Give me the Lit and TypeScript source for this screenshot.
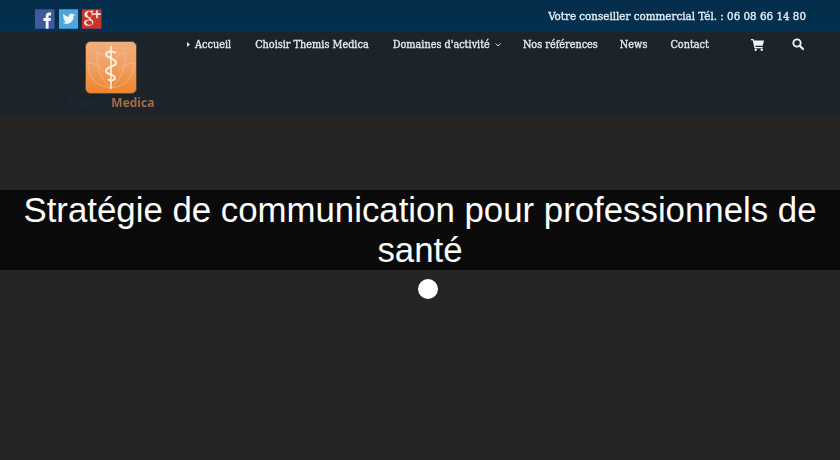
import { LitElement, html, css } from "lit";
import { customElement } from "lit/decorators.js";

@customElement("app-root")
export class AppRoot extends LitElement {
  static styles = css`
    :host {
      display: block;
      width: 840px;
      height: 460px;
      overflow: hidden;
      background: #252525;
      font-family: "Liberation Sans", Arial, sans-serif;
    }
    .topbar {
      height: 32px;
      background: linear-gradient(#032d4b, #03314f);
      display: flex;
      align-items: center;
      justify-content: space-between;
      padding: 0 34px 0 35px;
      box-sizing: border-box;
    }
    .social {
      display: flex;
      gap: 4px;
      margin-top: 5px;
      filter: blur(0.4px);
    }
    .social svg {
      display: block;
      width: 19.500px;
      height: 20px;
    }
    .phone {
      font-family: "DejaVu Serif Condensed", "DejaVu Serif", serif;
      font-stretch: condensed;
      font-size: 11.500px;
      color: #e3edf3;
      margin-top: -1px;
      -webkit-text-stroke: 0.35px #e3edf3;
      filter: blur(0.3px);
    }
    .navbar {
      height: 82px;
      background: #1c242b;
      display: flex;
      align-items: flex-start;
      box-sizing: border-box;
      padding-left: 70px;
    }
    .logo {
      width: 116px;
      display: flex;
      flex-direction: column;
      flex: none;
    }
    .logo svg {
      display: block;
      width: 52px;
      height: 53px;
      margin: 9px 0 0 15px;
      filter: blur(0.5px);
    }
    .wordmark {
      font-family: "Open Sans", sans-serif;
      font-weight: 700;
      font-size: 12px;
      line-height: 16px;
      margin: 1px 0 0 -2px;
      color: #a96a3e;
      white-space: nowrap;
      filter: blur(0.3px);
    }
    .wordmark span {
      color: #1b2937;
    }
    .menu {
      display: flex;
      align-items: center;
      height: 24px;
      font-family: "DejaVu Serif Condensed", "DejaVu Serif", serif;
      font-stretch: condensed;
      font-size: 10.800px;
      color: #e4e8ea;
      white-space: nowrap;
      -webkit-text-stroke: 0.35px #e4e8ea;
      filter: blur(0.3px);
    }
    .menu > span {
      display: flex;
      align-items: center;
    }
    .caret {
      width: 3px;
      height: 5px;
      margin-right: 5px;
      margin-top: 1px;
    }
    .chev {
      width: 6px;
      height: 4px;
      margin-left: 5px;
      margin-top: 2px;
    }
    .i1 { margin-left: 1px; }
    .i2 { margin-left: 24px; }
    .i3 { margin-left: 24px; }
    .i4 { margin-left: 22px; }
    .i5 { margin-left: 22px; }
    .i6 { margin-left: 23px; }
    .cart {
      width: 13px;
      height: 13px;
      margin-left: 42px;
    }
    .search {
      width: 12px;
      height: 12px;
      margin-left: 28px;
    }
    .content {
      padding-top: 76px;
      display: flex;
      flex-direction: column;
    }
    h1 {
      margin: 0;
      background: #0a0a0a;
      color: #fff;
      font-weight: 400;
      font-size: 34.800px;
      line-height: 40px;
      text-align: center;
    }
    .dot {
      width: 20px;
      height: 20px;
      border-radius: 50%;
      background: #fff;
      margin: 9px 0 0 418px;
    }
  `;

  render() {
    return html`
      <div class="topbar">
        <div class="social">
          <svg viewBox="0 0 20 20">
            <rect width="20" height="20" fill="#3f5a9c" />
            <path d="M11 20v-8H8.600V9H11V7c0-2.400 1.400-3.600 3.500-3.600h2v2.900h-1.400c-.9 0-1.200.5-1.200 1.200V9h2.500l-.4 3h-2.100v8z" fill="#f2f4f8" />
          </svg>
          <svg viewBox="0 0 20 20">
            <rect width="20" height="20" fill="#4fa6dc" />
            <path d="M16.500 5.600c-.5.2-1 .4-1.500.4.600-.3 1-.8 1.200-1.400-.5.3-1.100.5-1.700.6a2.700 2.700 0 0 0-4.500 2.400C7.800 7.500 5.900 6.500 4.600 4.900c-.7 1.200-.4 2.800.8 3.600-.4 0-.8-.1-1.200-.3 0 1.300.9 2.400 2.100 2.700-.4.100-.8.100-1.200 0 .3 1.100 1.300 1.800 2.500 1.900-1.100.9-2.500 1.200-3.900 1.100 4.700 2.800 11.400.3 11.300-6.900.5-.4 1-.9 1.500-1.400z" fill="#eef7fc" />
          </svg>
          <svg viewBox="0 0 20 20">
            <rect width="20" height="20" fill="#c8352b" />
            <path d="M7.500 1.500c-3 0-5 1.700-5 3.900 0 2 1.500 3.400 3.700 3.400h.7c-.3.700 0 1.200.4 1.700-2.800.1-5.300 1.100-5.300 3.300 0 1.900 2.200 3.200 4.900 3.200 3 0 4.800-1.800 4.800-3.500 0-2.700-3-3.100-3-4.500 0-1.100 2.400-1.500 2.400-4.100 0-1.100-.6-1.900-1.100-2.300h1.200l1.100-1.100zm.7 6.700c-1.600 0-2.800-1.700-2.800-3.400 0-1.300.7-2.400 1.900-2.400 1.600 0 2.700 1.800 2.700 3.400 0 1.400-.7 2.400-1.800 2.400zM7.300 11.200c1.900.6 3.300 1.400 3.300 2.800 0 1.200-1.100 2-3 2-1.900 0-3.300-1-3.300-2.400 0-1.500 1.400-2.400 3-2.400z" fill="#f7e6e2" />
            <path d="M14.500 1v3.200h-3v1.800h3v3.200h1.700V6h3V4.200h-3V1z" fill="#f7e6e2" />
          </svg>
        </div>
        <div class="phone">Votre conseiller commercial Tél. : 06 08 66 14 80</div>
      </div>
      <div class="navbar">
        <div class="logo">
          <svg viewBox="0 0 52 53">
            <defs>
              <linearGradient id="lg" x1="0" y1="0" x2="0" y2="1">
                <stop offset="0" stop-color="#f0b080" />
                <stop offset="0.55" stop-color="#f09c5e" />
                <stop offset="1" stop-color="#ee842e" />
              </linearGradient>
            </defs>
            <rect x="0.500" y="0.500" width="51" height="52" rx="5" fill="url(#lg)" stroke="#6a4426" />
            <g fill="none" stroke="#f9d6b4" stroke-width="0.800" opacity="0.500">
              <path d="M26 47C12 46 3 37 3 22c6 0 12 3 16 8M26 47c14-1 23-10 23-25-6 0-12 3-16 8" />
              <path d="M26 47C17 40 11 28 12 11c5 2 10 6 14 11 4-5 9-9 14-11 1 17-5 29-14 36z" />
            </g>
            <path d="M26 5v43" stroke="#fff3e6" stroke-width="1.500" />
            <path d="M31 12c-3-2-10-2-10 1 0 4 10 4 10 9 0 4-10 3-10 8 0 4 9 3 9 7 0 3-6 3-7 1" fill="none" stroke="#fff3e6" stroke-width="2" />
          </svg>
          <div class="wordmark"><span>Themis</span>Medica</div>
        </div>
        <div class="menu">
          <span class="i1">
            <svg class="caret" viewBox="0 0 3 5"><path d="M0 0l3 2.500L0 5z" fill="#e4e8ea" /></svg>
            Accueil
          </span>
          <span class="i2">Choisir Themis Medica</span>
          <span class="i3">
            Domaines d'activité
            <svg class="chev" viewBox="0 0 6 4"><path d="M.5.500L3 3 5.500.500" fill="none" stroke="#c9ced1" /></svg>
          </span>
          <span class="i4">Nos références</span>
          <span class="i5">News</span>
          <span class="i6">Contact</span>
          <svg class="cart" viewBox="0 0 13 13">
            <path d="M0 1h2.500l.4 1.500H13l-1.300 5.200H4.300l.3 1.300h7v1.200H3.500L1.700 2.200H0z" fill="#f2f4f5" />
            <circle cx="4.700" cy="11.700" r="1.200" fill="#f2f4f5" />
            <circle cx="10.700" cy="11.700" r="1.200" fill="#f2f4f5" />
          </svg>
          <svg class="search" viewBox="0 0 12 12">
            <circle cx="5" cy="5" r="3.700" fill="none" stroke="#f2f4f5" stroke-width="1.800" />
            <path d="M7.800 7.800L11 11" stroke="#f2f4f5" stroke-width="2.200" stroke-linecap="round" />
          </svg>
        </div>
      </div>
      <div class="content">
        <h1>Stratégie de communication pour professionnels de santé</h1>
        <div class="dot"></div>
      </div>
    `;
  }
}
